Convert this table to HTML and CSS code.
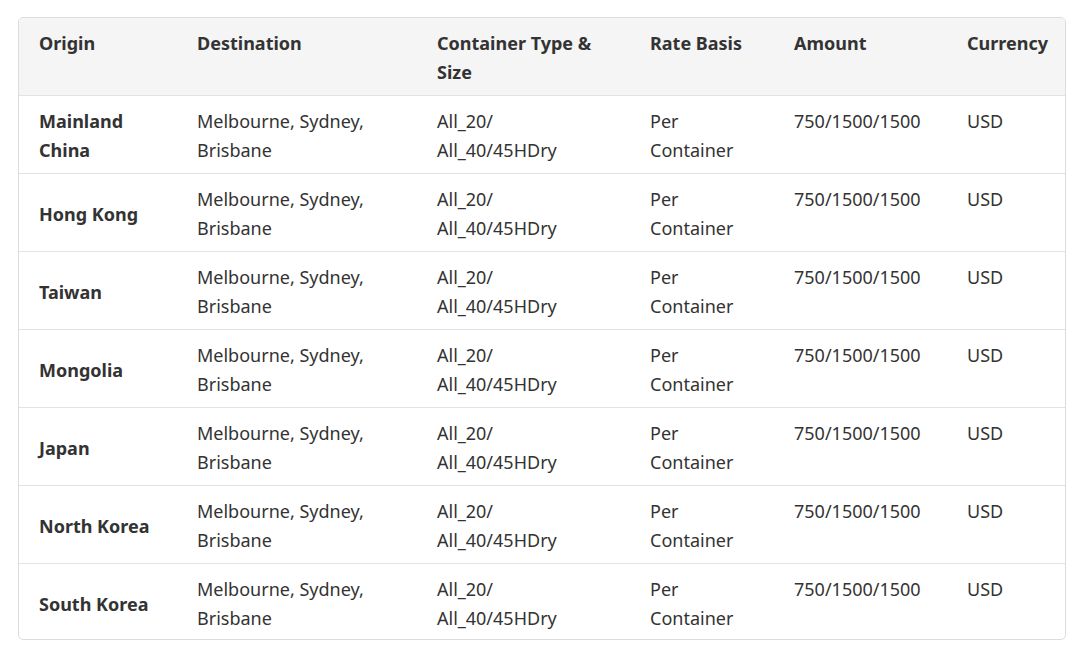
FILE: index.html
```html
<!DOCTYPE html>
<html>
<head>
<meta charset="utf-8">
<link rel="stylesheet" href="styles.css">
</head>
<body>
<div class="wrap">
<table class="rates">
<colgroup>
<col class="c1"><col class="c2"><col class="c3"><col class="c4"><col class="c5"><col class="c6">
</colgroup>
<thead>
<tr><th>Origin</th><th>Destination</th><th>Container Type &amp; Size</th><th>Rate Basis</th><th>Amount</th><th>Currency</th></tr>
</thead>
<tbody>
<tr><th>Mainland China</th><td>Melbourne, Sydney, Brisbane</td><td>All_20/ All_40/45HDry</td><td>Per Container</td><td>750/1500/1500</td><td>USD</td></tr>
<tr><th>Hong Kong</th><td>Melbourne, Sydney, Brisbane</td><td>All_20/ All_40/45HDry</td><td>Per Container</td><td>750/1500/1500</td><td>USD</td></tr>
<tr><th>Taiwan</th><td>Melbourne, Sydney, Brisbane</td><td>All_20/ All_40/45HDry</td><td>Per Container</td><td>750/1500/1500</td><td>USD</td></tr>
<tr><th>Mongolia</th><td>Melbourne, Sydney, Brisbane</td><td>All_20/ All_40/45HDry</td><td>Per Container</td><td>750/1500/1500</td><td>USD</td></tr>
<tr><th>Japan</th><td>Melbourne, Sydney, Brisbane</td><td>All_20/ All_40/45HDry</td><td>Per Container</td><td>750/1500/1500</td><td>USD</td></tr>
<tr><th>North Korea</th><td>Melbourne, Sydney, Brisbane</td><td>All_20/ All_40/45HDry</td><td>Per Container</td><td>750/1500/1500</td><td>USD</td></tr>
<tr class="last"><th>South Korea</th><td>Melbourne, Sydney, Brisbane</td><td>All_20/ All_40/45HDry</td><td>Per Container</td><td>750/1500/1500</td><td>USD</td></tr>
</tbody>
</table>
</div>
</body>
</html>
```
FILE: styles.css
```css
html, body { margin: 0; padding: 0; background: #fff; }
body {
  font-family: "Noto Sans", "Open Sans", sans-serif;
  color: #333;
  font-size: 18px;
}
.wrap {
  padding: 17px 14px 0 18px;
}
.rates {
  width: 1048px;
  border-collapse: separate;
  border-spacing: 0;
  table-layout: fixed;
  border: 1px solid #dcdcdc;
  border-radius: 5px;
  overflow: hidden;
}
.c1 { width: 158px; }
.c2 { width: 240px; }
.c3 { width: 213px; }
.c4 { width: 144px; }
.c5 { width: 173px; }
.c6 { width: 118px; }
.rates th, .rates td {
  text-align: left;
  vertical-align: top;
  padding: 11px 20px 8px 20px;
  line-height: 29px;
  border-top: 1px solid #e2e2e2;
}
.rates thead th {
  background: #f5f5f5;
  border-top: none;
  font-weight: 700;
}
.rates tbody th {
  font-weight: 700;
  vertical-align: middle;
}
.rates tbody .last td,
.rates tbody .last th {
  padding-bottom: 6px;
}
```
